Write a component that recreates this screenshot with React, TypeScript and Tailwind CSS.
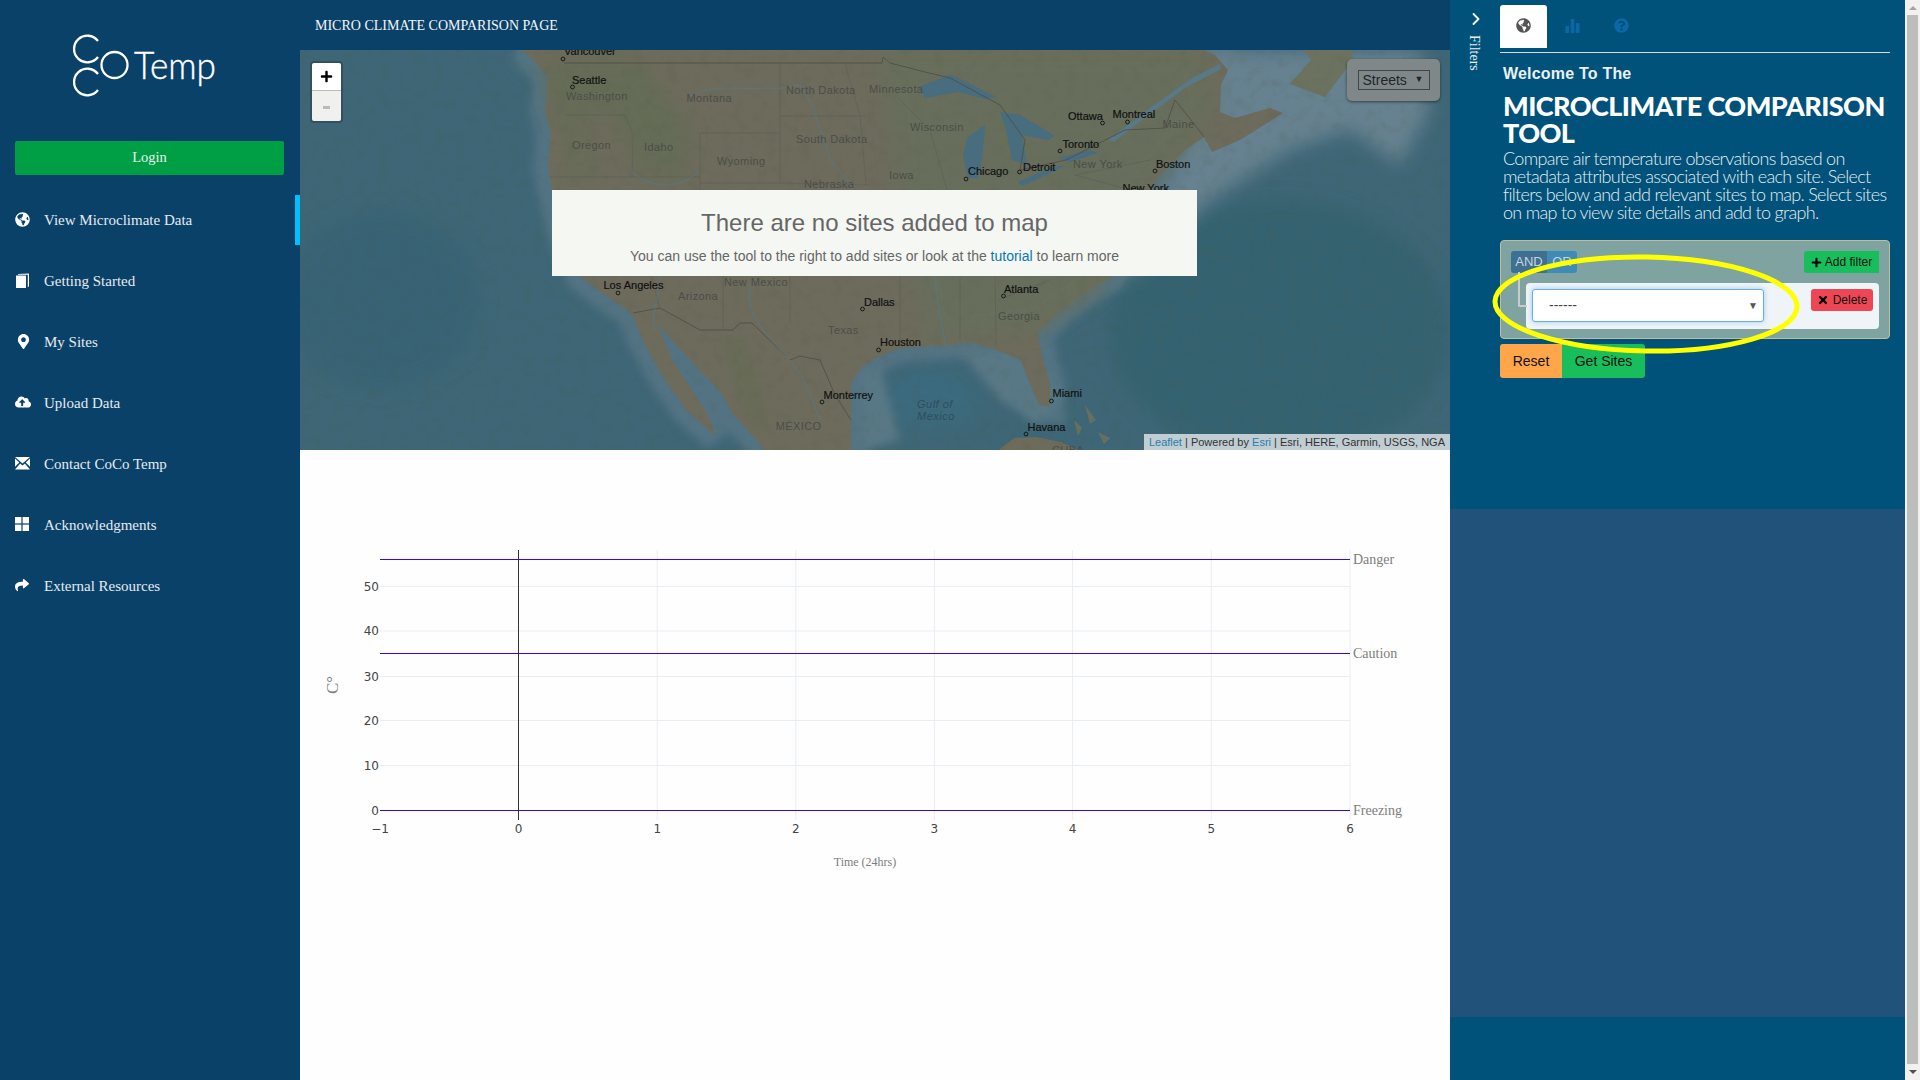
import React from "react";
import {
  FaGlobeAmericas,
  FaMapMarkerAlt,
  FaCloudUploadAlt,
  FaShare,
  FaQuestionCircle,
  FaPlus,
  FaTimes,
} from "react-icons/fa";
import { ChevronRight } from "lucide-react";

const serif = "font-['Liberation_Serif',serif]";
const sans = "font-['Liberation_Sans',sans-serif]";

// small glyphs the icon packs don't have in this shape
function BookIcon() {
  return (
    <svg viewBox="0 0 15 15" className="h-[15px] w-[15px] fill-white">
      <path d="M1 2.5 L11 2.5 L11 15 L1 15 Z" />
      <path d="M3 1 L14 0.5 L14 13.5 L12.8 14 L12.8 1.8 L3 1.8 Z" />
    </svg>
  );
}

function MailIcon() {
  return (
    <svg viewBox="0 0 15 13" className="h-[13px] w-[15px] fill-white">
      <path d="M0 0 H15 L7.5 6.5 Z" />
      <path d="M0 1.5 L4.3 5.6 L0 9.8 Z" />
      <path d="M15 1.5 L10.7 5.6 L15 9.8 Z" />
      <path d="M0 12.5 L5.2 6.6 L7.5 8.4 L9.8 6.6 L15 12.5 Z" />
    </svg>
  );
}

function GridIcon() {
  return (
    <svg viewBox="0 0 14 14" className="h-[14px] w-[14px] fill-white">
      <rect x="0" y="0" width="6.4" height="6.4" />
      <rect x="7.6" y="0" width="6.4" height="6.4" />
      <rect x="0" y="7.6" width="6.4" height="6.4" />
      <rect x="7.6" y="7.6" width="6.4" height="6.4" />
    </svg>
  );
}

const navItems = [
  { label: "View Microclimate Data", icon: <FaGlobeAmericas className="text-[15px] text-white" />, active: true },
  { label: "Getting Started", icon: <BookIcon /> },
  { label: "My Sites", icon: <FaMapMarkerAlt className="ml-[1px] text-[15px] text-white" /> },
  { label: "Upload Data", icon: <FaCloudUploadAlt className="text-[16px] text-white" /> },
  { label: "Contact CoCo Temp", icon: <MailIcon /> },
  { label: "Acknowledgments", icon: <GridIcon /> },
  { label: "External Resources", icon: <FaShare className="text-[14px] text-white" /> },
];

function Logo() {
  return (
    <svg viewBox="0 0 300 141" className="h-[141px] w-[300px]">
      <g fill="none" stroke="#ffffff" strokeWidth="2.3">
        <path d="M98 41 A13.3 13.3 0 1 0 98 57" />
        <path d="M98 74 A13.3 13.3 0 1 0 98 90" />
        <circle cx="114.5" cy="65" r="13" />
      </g>
      <text
        x="134"
        y="79"
        fill="#ffffff"
        stroke="#ffffff"
        strokeWidth="0.4"
        fontSize="37"
        fontWeight="300"
        fontFamily="Lato, sans-serif"
        textLength="82"
        lengthAdjust="spacingAndGlyphs"
      >
        Temp
      </text>
    </svg>
  );
}

function Sidebar() {
  return (
    <aside className="flex h-full w-[300px] shrink-0 flex-col bg-[#0a4169]">
      <Logo />
      <button className={`mx-[15px] h-[34px] w-[269px] rounded-[2px] bg-[#009f45] pb-[1px] text-[14.5px] text-[#e6f4ec] ${serif}`}>
        Login
      </button>
      <nav className="mt-[15px] flex flex-col">
        {navItems.map((item) => (
          <div key={item.label} className="relative flex h-[61px] items-center pb-[1px] pl-[15px]">
            <span className="flex w-[29px] -translate-y-[1px] items-center">{item.icon}</span>
            <span className={`text-[15px] text-[#e4ebf0] ${serif}`}>{item.label}</span>
            {item.active && <span className="absolute right-0 top-[5px] h-[50px] w-[5px] bg-[#00bfff]" />}
          </div>
        ))}
      </nav>
    </aside>
  );
}

const cities: [string, number, number, number, number][] = [
  ["Vancouver", 564, 55, 563, 59],
  ["Seattle", 572, 84, 572.5, 87],
  ["Los Angeles", 603.5, 289, 618, 293],
  ["Dallas", 864, 306, 862.5, 309],
  ["Houston", 880, 346, 878.6, 350],
  ["Monterrey", 823.5, 399, 822, 402],
  ["Ottawa", 1068, 120, 1102.5, 123],
  ["Montreal", 1112.5, 118, 1127.5, 122],
  ["Toronto", 1062.5, 148, 1060, 151],
  ["Boston", 1156, 168, 1155, 171],
  ["Chicago", 968, 175, 966, 179],
  ["Detroit", 1023, 171, 1019.6, 172],
  ["New York", 1122.5, 192, 1140, 200],
  ["Atlanta", 1004, 293, 1003.5, 296],
  ["Miami", 1052.5, 397, 1051.4, 401],
  ["Havana", 1027.5, 431, 1026, 434],
];

const regions: [string, number, number][] = [
  ["Washington", 566, 100],
  ["Montana", 686.5, 102],
  ["North Dakota", 786, 94],
  ["Minnesota", 869, 93],
  ["Oregon", 572, 149],
  ["Idaho", 644, 151],
  ["South Dakota", 796, 143],
  ["Wyoming", 717, 165],
  ["Nebraska", 804, 188],
  ["Iowa", 889, 179],
  ["New Mexico", 724, 286],
  ["Arizona", 678, 300],
  ["Texas", 828, 334],
  ["Wisconsin", 910, 131],
  ["Maine", 1162.5, 128],
  ["New York", 1073, 168],
  ["Georgia", 998, 320],
  ["MÉXICO", 775.7, 430],
  ["CUBA", 1052, 454],
];

const landPath =
  "M515 50 L522 50 L535 62 L549 77 L545 110 L551 133 L548 167 L552 190 L565 240 L581 277 L602 293 L631 313 L644 343 L663 377 L686 410 L717 437 L705 410 L690 387 L672 360 L658 325 L690 360 L721 393 L732 413 L759 443 L765 452 L851 452 L851 420 L851 383 L862 367 L878 357 L900 348 L946 345 L971 342 L996 350 L1021 360 L1027 377 L1039 405 L1050 407 L1050 383 L1043 360 L1038 333 L1057 313 L1082 293 L1111 277 L1130 240 L1155 180 L1165 170 L1185 150 L1204 137 L1212 152 L1240 140 L1283 113 L1270 108 L1235 118 L1220 112 L1221 85 L1228 70 L1215 55 L1200 48 Z";

function LeafletMap() {
  return (
    <div className="relative h-[400px] w-full overflow-hidden bg-[#3c6474]">
      <svg viewBox="300 50 1150 400" className="absolute inset-0 h-full w-full">
        <defs>
          <filter id="soft" x="-20%" y="-20%" width="140%" height="140%">
            <feGaussianBlur stdDeviation="9" />
          </filter>
          <filter id="softer" x="-20%" y="-20%" width="140%" height="140%">
            <feGaussianBlur stdDeviation="4" />
          </filter>
          <filter id="grain" x="0" y="0" width="100%" height="100%">
            <feTurbulence type="fractalNoise" baseFrequency="0.09" numOctaves="3" seed="4" />
            <feColorMatrix values="0 0 0 0 0.07  0 0 0 0 0.1  0 0 0 0 0.05  0 0 0 1.6 -0.8" />
          </filter>
        </defs>

        {/* ocean depth */}
        <rect x="300" y="50" width="1150" height="400" fill="#3e6676" />
        <ellipse cx="1280" cy="330" rx="170" ry="130" fill="#35626f" filter="url(#soft)" />
        <ellipse cx="380" cy="300" rx="100" ry="90" fill="#396474" filter="url(#soft)" />
        <ellipse cx="930" cy="400" rx="50" ry="28" fill="#3a6a7e" filter="url(#soft)" />

        {/* shelf */}
        <path d={landPath} fill="none" stroke="#537383" strokeWidth="30" filter="url(#softer)" />
        <path
          d="M1200 50 L1420 50 L1430 110 L1400 165 L1350 130 L1290 150 L1210 200 L1120 285 L1180 150 Z"
          fill="#66818f"
          filter="url(#soft)"
        />
        <path d="M960 352 L1030 350 L1060 395 L1040 425 L1000 400 Z" fill="#587885" filter="url(#softer)" />
        <path d="M860 372 L880 365 L900 440 L860 452 Z" fill="#587885" filter="url(#softer)" />

        {/* land */}
        <path d={landPath} fill="#6d6b5c" />
        <path d="M1290 84 L1311 60 L1304 50 L1352 50 L1353 60 L1325 97 Z" fill="#6b7360" />
        <path d="M996 452 L1014 438 L1036 437 L1061 442 L1082 452 Z" fill="#6d6b5c" />
        <path d="M1074 420 L1082 428 L1078 436 Z M1085 405 L1096 420 L1090 424 Z M1098 432 L1110 438 L1104 444 Z" fill="#66705f" />

        {/* vegetation */}
        <path d="M880 50 L1200 50 L1215 110 L1160 175 L1100 290 L1040 330 L930 340 L900 200 Z" fill="#676e5b" filter="url(#soft)" />
        <path d="M540 60 L640 60 L690 130 L680 180 L640 170 L610 110 L560 130 Z" fill="#656c57" filter="url(#soft)" />
        <path d="M720 335 L745 340 L770 425 L755 435 L735 380 Z" fill="#676c57" filter="url(#softer)" />
        <path d="M564 120 L590 130 L600 175 L565 185 Z" fill="#676c58" filter="url(#softer)" />
        <rect x="300" y="50" width="1150" height="400" filter="url(#grain)" opacity="0.2" />

        {/* lakes and estuary */}
        <g fill="#476d7e">
          <path d="M918 87 L950 75 L958 78 L996 97 L985 99 L958 92 L925 98 Z" />
          <path d="M968 137 L985 125 L982 160 L978 178 L968 178 L963 155 Z" />
          <path d="M1000 112 L1020 115 L1055 136 L1048 140 L1022 135 L1027 165 L1012 160 L1006 130 Z" />
          <path d="M1018 182 L1050 168 L1066 165 L1040 178 L1022 186 Z" />
          <path d="M1058 158 L1090 150 L1098 153 L1070 162 Z" />
          <path d="M1108 140 L1150 108 L1192 78 L1220 64 L1221 69 L1185 88 L1150 114 L1114 142 Z" fill="#587985" />
        </g>

        {/* borders */}
        <g fill="none" stroke="#4c4d47" strokeWidth="0.8">
          <path d="M564 63 L882 63 L883 57 L890 63 L925 72 L950 78" />
          <path d="M950 78 L1000 105 L1025 140 L1020 170 L1066 160 L1125 130 L1165 128 L1175 100 L1195 125 L1204 137" />
          <path d="M633 313 L660 308 L700 330 L733 330 L740 323 L752 323 L790 360 L800 356 L820 360 L835 395 L851 420" />
        </g>
        <g fill="none" stroke="#5d5e54" strokeWidth="0.6">
          <path d="M780 63 L780 183 M780 116 L865 116 M780 133 L700 133 L700 230 M700 183 L780 183 L868 185" />
          <path d="M565 115 L625 115 L633 135 L632 177 L700 177 M632 177 L550 177" />
          <path d="M723 230 L723 330 M790 230 L790 322 M600 210 L640 230 L660 310" />
          <path d="M900 190 L900 345 M960 230 L960 340 M995 270 L996 345 M1050 280 L998 300" />
          <path d="M1150 160 L1075 175 L1130 190 M845 63 L860 116 L866 185 M900 100 L930 130 L950 200" />
        </g>
        <g fill="none" stroke="#54788a" strokeWidth="0.8">
          <path d="M690 96 C720 80 760 95 800 85 C815 105 820 130 830 160 C850 180 865 210 872 230" />
          <path d="M630 170 C650 190 680 190 700 170" />
          <path d="M660 270 C660 300 650 310 655 330 M750 285 C745 310 760 330 790 360 C810 385 815 410 820 420" />
          <path d="M930 200 C930 260 940 320 946 345" />
        </g>

        {regions.map(([name, x, y]) => (
          <text key={name + x} x={x} y={y} fontSize="11" letterSpacing="0.4" fill="#4b4d49" fontFamily="Liberation Sans, sans-serif">
            {name}
          </text>
        ))}
        <text x="917" y="408" fontSize="11" fontStyle="italic" letterSpacing="0.5" fill="#2f4d5c" fontFamily="Liberation Sans, sans-serif">
          Gulf of
        </text>
        <text x="917" y="420" fontSize="11" fontStyle="italic" letterSpacing="0.5" fill="#2f4d5c" fontFamily="Liberation Sans, sans-serif">
          Mexico
        </text>
        {cities.map(([name, x, y, dx, dy]) => (
          <g key={name}>
            <text x={x} y={y} fontSize="11" fill="#111111" stroke="#111111" strokeWidth="0.2" fontFamily="Liberation Sans, sans-serif">
              {name}
            </text>
            <circle cx={dx} cy={dy} r="1.9" fill="none" stroke="#111111" strokeWidth="0.9" />
          </g>
        ))}
      </svg>

      {/* zoom control */}
      <div className="absolute left-[10px] top-[11px] w-[33px] overflow-hidden rounded-[4px] border-2 border-[#33505e]">
        <div className="flex h-[28px] items-center justify-center border-b border-[#bbbbbb] bg-white">
          <FaPlus className="text-[13px] text-black" />
        </div>
        <div className="flex h-[30px] items-center justify-center bg-[#f0f1ee] pt-[3px]">
          <span className="h-[3px] w-[7px] bg-[#bbbbbb]" />
        </div>
      </div>

      {/* basemap select */}
      <div className="absolute left-[1047px] top-[9px] flex h-[42px] w-[93px] items-center justify-center rounded-[5px] bg-[#7f8789] shadow-[0_1px_3px_rgba(0,0,0,0.5)]">
        <div className={`flex h-[20px] w-[72px] items-center justify-between border border-[#3f4648] pl-[4px] pr-[5px] text-[14px] text-[#1f2526] ${sans}`}>
          <span>Streets</span>
          <span className="text-[9px]">▼</span>
        </div>
      </div>

      {/* empty state */}
      <div className={`absolute left-[252px] top-[140px] flex h-[86px] w-[645px] flex-col items-center bg-[#f5f7f3] pt-[19px] text-[#666] ${sans}`}>
        <div className="text-[24px] leading-[28px]">There are no sites added to map</div>
        <div className="mt-[10px] text-[14px] leading-[18px]">
          You can use the tool to the right to add sites or look at the <span className="text-[#0a76b7]">tutorial</span> to learn more
        </div>
      </div>

      <div className={`absolute bottom-0 right-0 flex h-[16px] items-center bg-[#c0cdd2] px-[5px] text-[11px] text-[#333] ${sans}`}>
        <span className="text-[#2a7eaa]">Leaflet</span>
        <span>&nbsp;| Powered by&nbsp;</span>
        <span className="text-[#2a7eaa]">Esri</span>
        <span>&nbsp;| Esri, HERE, Garmin, USGS, NGA</span>
      </div>
    </div>
  );
}

const xTicks = [
  [-1, 380],
  [0, 518.5],
  [1, 657.2],
  [2, 795.8],
  [3, 934.4],
  [4, 1072.6],
  [5, 1211.3],
  [6, 1350],
];
const yTicks = [
  [50, 586.5],
  [40, 631],
  [30, 676.5],
  [20, 720.5],
  [10, 765.5],
  [0, 810.5],
];
const limits: [string, number][] = [
  ["Danger", 559.5],
  ["Caution", 653.5],
  ["Freezing", 810.5],
];

function Chart() {
  return (
    <div className="min-h-0 flex-1 bg-[#fefefe]">
      <svg viewBox="300 450 1150 630" className="h-full w-full">
        {xTicks
          .filter(([v]) => v > 0)
          .map(([v, x]) => (
            <line key={v} x1={x} x2={x} y1="550" y2="820" stroke="#e9edf2" strokeWidth="1" />
          ))}
        {yTicks
          .filter(([v]) => v > 0)
          .map(([v, y]) => (
            <line key={v} x1="380" x2="1350" y1={y} y2={y} stroke="#e9edf2" strokeWidth="1" />
          ))}
        <line x1="518.5" x2="518.5" y1="550" y2="820" stroke="#333333" strokeWidth="1" />
        {limits.map(([name, y]) => (
          <g key={name}>
            <line x1="380" x2="1350" y1={y} y2={y} stroke="#3a00f0" strokeWidth="1.1" />
            <text x="1353" y={y + 4.5} fontSize="14" fill="#7d7d7d" fontFamily="Liberation Serif, serif">
              {name}
            </text>
          </g>
        ))}
        <g fontSize="12" fill="#444444" fontFamily="DejaVu Sans, sans-serif">
          {xTicks.map(([v, x]) => (
            <text key={v} x={x} y="833" textAnchor="middle">
              {v < 0 ? "−1" : v}
            </text>
          ))}
          {yTicks.map(([v, y]) => (
            <text key={v} x="379" y={y + 4} textAnchor="end">
              {v}
            </text>
          ))}
        </g>
        <text x="865" y="866" textAnchor="middle" fontSize="12" fill="#7d7d7d" fontFamily="Liberation Serif, serif">
          Time (24hrs)
        </text>
        <text
          transform="translate(338 685) rotate(-90)"
          textAnchor="middle"
          fontSize="17"
          fill="#7d7d7d"
          fontFamily="Liberation Serif, serif"
        >
          C°
        </text>
      </svg>
    </div>
  );
}

function FilterBox() {
  return (
    <div className={`relative h-[99px] rounded-[4px] border border-[#c9bb94] bg-[#7fa3a0] pt-[10px] ${sans}`}>
      <div className="flex items-start justify-between pl-[10px] pr-[10px]">
        <div className="flex h-[22px] w-[66px] overflow-hidden rounded-[3px] text-[13px] text-[#c8d6de]">
          <span className="flex w-[36px] items-center justify-center bg-[#3f6f91]">AND</span>
          <span className="flex flex-1 items-center justify-center bg-[#3f8bb6]">OR</span>
        </div>
        <div className="flex h-[22px] w-[75px] items-center justify-center gap-[3px] rounded-l-[3px] bg-[#18be5b] text-[12px] text-[#111]">
          <FaPlus className="text-[11px] text-black" />
          Add filter
        </div>
      </div>
      {/* connector between the group and its rule */}
      <span className="absolute left-[17px] top-[31px] h-[35px] w-[9px] rounded-bl-[2px] border-b-2 border-l-2 border-[#c8cccb]" />
      <div className="ml-[25px] mr-[10px] mt-[10px] flex h-[46px] justify-between rounded-[4px] bg-[#eff4f8] px-[6px] pt-[6px]">
        <div className="flex h-[33px] w-[232px] items-center justify-between rounded-[3px] border border-[#66afe9] bg-white pl-[16px] pr-[5px] text-[14px] text-[#444] shadow-[0_0_5px_rgba(102,175,233,0.6)]">
          <span>------</span>
          <span className="text-[10px] text-[#555]">▼</span>
        </div>
        <div className="flex h-[22px] w-[62px] items-center justify-center gap-[4px] rounded-[3px] bg-[#ef4655] text-[12px] text-[#111]">
          <FaTimes className="text-[12px] text-black" />
          Delete
        </div>
      </div>
    </div>
  );
}

function FilterPanel() {
  return (
    <div className="relative flex h-full w-[455px] shrink-0 flex-col bg-[#00527a]">
      <div className="flex h-[509px] shrink-0">
        <div className="flex w-[50px] shrink-0 flex-col items-center pl-[1px] pt-[9px]">
          <ChevronRight className="h-[20px] w-[20px] text-white" strokeWidth={2.2} />
          <span className={`mt-[6px] -translate-x-[2px] text-[14px] leading-[18px] text-[#e8eef2] [writing-mode:vertical-rl] ${serif}`}>Filters</span>
        </div>
        <div className="w-[390px]">
          <div className="flex pt-[5px]">
            <div className="flex h-[43px] w-[47px] items-center justify-center rounded-t-[3px] bg-white pb-[2px]">
              <FaGlobeAmericas className="text-[15px] text-[#555]" />
            </div>
            <div className="flex h-[43px] w-[51px] items-center justify-center pb-[2px]">
              <svg viewBox="0 0 15 15" className="h-[15px] w-[15px] fill-[#0b68a6]">
                <rect x="0.5" y="8" width="3.6" height="7" />
                <rect x="5.7" y="1" width="3.6" height="14" />
                <rect x="10.9" y="5" width="3.6" height="10" />
              </svg>
            </div>
            <div className="flex h-[43px] w-[47px] items-center justify-center pb-[2px]">
              <FaQuestionCircle className="text-[15px] text-[#0b68a6]" />
            </div>
          </div>
          <div className="mt-[4px] h-px bg-[#ded9d2]" />
          <div className={`ml-[3px] mt-[11px] text-[16px] font-bold leading-[20px] tracking-[0.2px] text-[#eaf0f4] ${sans}`}>
            Welcome To The
          </div>
          <div className="ml-[3px] mt-[8px] whitespace-nowrap font-['Lato',sans-serif] text-[27px] font-black leading-[27px] tracking-[-0.56px] text-white">
            MICROCLIMATE COMPARISON
            <br />
            TOOL
          </div>
          <p className="ml-[3px] mt-[3px] whitespace-nowrap font-['Lato',sans-serif] text-[18px] font-light leading-[18px] tracking-[-0.7px] text-[#e6edf1]">
            Compare air temperature observations based on
            <br />
            metadata attributes associated with each site. Select
            <br />
            filters below and add relevant sites to map. Select sites
            <br />
            on map to view site details and add to graph.
          </p>
          <div className="mt-[19px]">
            <FilterBox />
          </div>
          <div className={`mt-[5px] flex text-[14px] text-[#111] ${sans}`}>
            <span className="flex h-[34px] w-[62px] items-center justify-center rounded-l-[3px] bg-[#ffa64a]">Reset</span>
            <span className="flex h-[34px] w-[83px] items-center justify-center rounded-r-[3px] bg-[#18be5b]">Get Sites</span>
          </div>
        </div>
      </div>
      <div className="h-[508px] shrink-0 bg-[#21527a]" />

      {/* hand-drawn highlight sitting over the filter row */}
      <svg viewBox="0 0 320 110" className="pointer-events-none absolute left-[36px] top-[249px] h-[110px] w-[320px]">
        <ellipse cx="160" cy="55" rx="151" ry="47" fill="none" stroke="#ffff00" strokeWidth="5" transform="rotate(1 160 55)" />
      </svg>
    </div>
  );
}

function Scrollbar() {
  return (
    <div className="flex h-full w-[15px] shrink-0 flex-col items-center bg-[#f1f1f1]">
      <div className="flex h-[15px] items-center justify-center">
        <span className="h-0 w-0 border-x-[4px] border-b-[4px] border-x-transparent border-b-[#a3a3a3]" />
      </div>
      <div className="h-[1049px] w-[11px] bg-[#bcbebb]" />
      <div className="flex flex-1 items-center justify-center">
        <span className="h-0 w-0 border-x-[4px] border-t-[4px] border-x-transparent border-t-[#505050]" />
      </div>
    </div>
  );
}

export default function App() {
  return (
    <div className="flex h-[1080px] w-[1920px] overflow-hidden bg-white">
      <Sidebar />
      <main className="flex h-full w-[1150px] shrink-0 flex-col">
        <header className={`flex h-[50px] shrink-0 items-center bg-[#0a4169] pl-[15px] text-[14px] text-[#f1f5f8] ${serif}`}>
          MICRO CLIMATE COMPARISON PAGE
        </header>
        <LeafletMap />
        <Chart />
      </main>
      <FilterPanel />
      <Scrollbar />
    </div>
  );
}
